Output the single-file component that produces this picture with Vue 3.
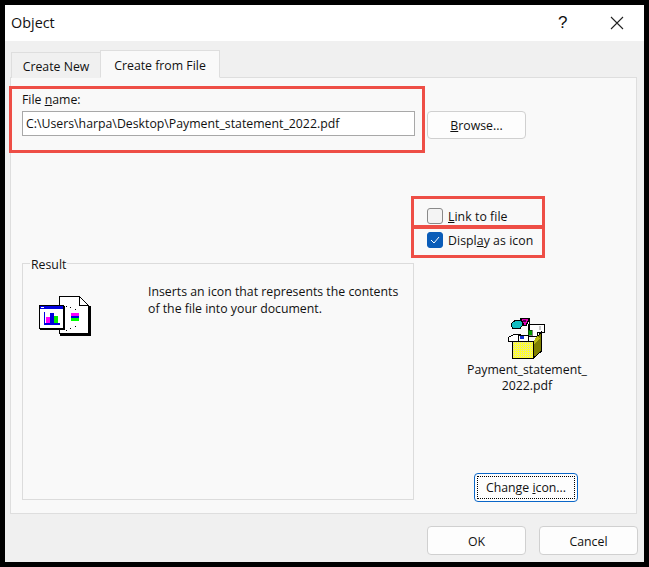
<script setup>
const dots = [[28,11],[32,12],[37,14],[37,31],[32,33],[28,35]]
</script>

<template>
  <div class="frame">
    <div class="dialog">
      <header class="titlebar">
        <span class="title">Object</span>
        <span class="help">?</span>
        <svg class="close" width="14" height="14" viewBox="0 0 14 14"><path d="M1 1 13 13M13 1 1 13" stroke="#222" stroke-width="1.1" fill="none"/></svg>
      </header>
      <div class="body">
        <div class="tabs">
          <div class="tab">Create New</div>
          <div class="tab active">Create from File</div>
        </div>
        <div class="panel">
          <div class="left">
            <label class="file-label">File <u>n</u>ame:</label>
            <div class="input">C:\Users\harpa\Desktop\Payment_statement_2022.pdf</div>
            <section class="result">
              <span class="legend">Result</span>
              <svg class="doc-icon" width="54" height="42" viewBox="0 0 54 42" shape-rendering="crispEdges">
                <path d="M21.5 1.5H41.5L50.5 10.5V38.5H21.5Z" fill="#fff" stroke="#000"/>
                <path d="M41.5 1.5V10.5H50.5Z" fill="#fff" stroke="#000"/>
                <rect x="51" y="11" width="2" height="30" fill="#000"/>
                <rect x="22" y="39" width="31" height="2" fill="#000"/>
                <rect v-for="d in dots" :key="d[0]+'-'+d[1]" :x="d[0]" :y="d[1]" width="1" height="1" fill="#000"/>
                <rect x="33" y="18" width="8" height="3" fill="#ff00ff"/>
                <rect x="33" y="21" width="8" height="2" fill="#0000e0"/>
                <rect x="33" y="23" width="8" height="3" fill="#00ff00"/>
                <rect x="1.5" y="10.5" width="24" height="23" fill="#fff" stroke="#000"/>
                <rect x="2" y="11" width="23" height="3" fill="#0000e0"/>
                <rect x="3" y="12" width="3" height="1" fill="#fff"/>
                <rect x="26" y="11" width="1" height="24" fill="#000"/>
                <rect x="2" y="34" width="25" height="1" fill="#000"/>
                <rect x="8" y="22" width="4" height="6" fill="#ff00ff"/>
                <rect x="12" y="18" width="4" height="10" fill="#0000e0"/>
                <rect x="16" y="21" width="4" height="7" fill="#00ee00"/>
                <rect x="6" y="17" width="1" height="13" fill="#0000e0"/>
                <rect x="6" y="28" width="16" height="2" fill="#0000e0"/>
              </svg>
              <p class="desc">Inserts an icon that represents the contents<br>of the file into your document.</p>
            </section>
          </div>
          <div class="right">
            <button class="btn browse"><u>B</u>rowse...</button>
            <div class="check first"><span class="box"></span><span class="cap"><u>L</u>ink to file</span></div>
            <div class="check second">
              <span class="box on">
                <svg width="10" height="8" viewBox="0 0 10 8"><path d="M1 4 4 7 9 1" stroke="#fff" stroke-width="1" fill="none"/></svg>
              </span>
              <span class="cap">Displ<u>a</u>y as icon</span>
            </div>
            <div class="preview">
              <svg class="box-icon" width="42" height="42" viewBox="0 0 42 42" shape-rendering="crispEdges">
                <defs>
                  <pattern id="dither" width="2" height="2" patternUnits="userSpaceOnUse">
                    <rect width="2" height="2" fill="#ffff30"/>
                    <rect x="1" y="1" width="1" height="1" fill="#d8d8c8"/>
                  </pattern>
                </defs>
                <path d="M22 7.5H38.5V15.5H31V19H22Z" fill="#fff" stroke="#000"/>
                <rect x="33" y="9" width="2" height="4" fill="#c8c8c8"/>
                <path d="M5.5 6.5 9 3.5H15L17.5 7 14 11.5H7L5.5 9Z" fill="#10bcc0" stroke="#000"/>
                <path d="M14.5 1.5H23.5L20 8.5H18Z" fill="#e000b8" stroke="#000"/>
                <rect x="17" y="3" width="3" height="2" fill="#500050"/>
                <rect x="23" y="2" width="1" height="15" fill="#000"/>
                <rect x="22" y="13" width="4" height="5" fill="#00a000" stroke="#000" stroke-width="0.5"/>
                <path d="M2.5 22.5V20.5L7.5 17.5H14V24H2.5Z" fill="#fff" stroke="#000"/>
                <rect x="12.5" y="18.5" width="10" height="7" fill="#fff" stroke="#000"/>
                <rect x="14" y="19" width="4" height="3" fill="#1030d0"/>
                <path d="M27 25.5 35.5 14.5V34L27 41.5Z" fill="#808000" stroke="#000"/>
                <path d="M27 24.5 31.5 19 34 21 27.5 28Z" fill="#b8b810"/>
                <rect x="6.5" y="24.5" width="21" height="17" fill="url(#dither)" stroke="#000"/>
              </svg>
              <div class="fname">Payment_statement_<br>2022.pdf</div>
            </div>
            <button class="btn change"><span class="focus"><span>Change <u>i</u>con...</span></span></button>
          </div>
        </div>
        <footer class="footer">
          <button class="btn action">OK</button>
          <button class="btn action">Cancel</button>
        </footer>
      </div>
      <div class="mark m1"></div>
      <div class="mark m2"></div>
      <div class="mark m3"></div>
    </div>
  </div>
</template>

<style>
html, body { margin: 0; background: #000; }
</style>

<style scoped>
.frame { width: 649px; height: 567px; box-sizing: border-box; padding: 5px; background: #000; font-family: "Open Sans", "Noto Sans", sans-serif; font-size: 12.3px; color: #111; }
.dialog { position: relative; width: 639px; height: 557px; display: flex; flex-direction: column; background: #f0f0f0; }
.titlebar { height: 36px; flex: none; background: #fff; display: flex; align-items: center; padding-left: 6px; }
.title { font-size: 14.4px; flex: 1; position: relative; top: -1px; }
.help { font-size: 17px; width: 11px; margin-right: 41px; font-family: "Liberation Sans", sans-serif; }
.close { margin-right: 20px; }
.body { flex: 1; display: flex; flex-direction: column; padding: 0 7px 0 5px; }
.tabs { display: flex; height: 37px; align-items: flex-end; padding-left: 1px; margin-bottom: -1px; position: relative; z-index: 1; }
.tab { height: 26px; line-height: 27px; box-sizing: border-box; background: #f0f0f0; border: 1px solid #dedede; border-bottom: none; width: 90px; text-align: center; white-space: nowrap; }
.tab.active { height: 28px; width: 120px; margin-left: -1px; line-height: 29px; background: #f9f9f9; border-bottom: 1px solid #f9f9f9; }
.panel { height: 437px; flex: none; box-sizing: border-box; background: #f9f9f9; border: 1px solid #dedede; display: flex; padding: 0 0 0 11px; }
.left { width: 393px; display: flex; flex-direction: column; }
.file-label { line-height: 16px; margin-top: 14px; height: 19px; }
.input { height: 25px; box-sizing: border-box; background: #fff; border: 1px solid #a8a8a8; line-height: 23px; padding-left: 3px; white-space: nowrap; }
.result { position: relative; margin-top: 127px; width: 392px; height: 237px; box-sizing: border-box; border: 1px solid #dcdcdc; display: flex; align-items: flex-start; }
.legend { position: absolute; left: 7px; top: -7px; padding: 0 1px; background: #f9f9f9; line-height: 16px; }
.doc-icon { position: absolute; left: 15px; top: 31px; }
.desc { margin: 19px 0 0 125px; line-height: 17px; white-space: nowrap; }
.right { margin-left: 12px; width: 200px; display: flex; flex-direction: column; align-items: flex-start; padding-top: 33px; }
.btn { font: inherit; color: inherit; background: #fdfdfd; border: 1px solid #d0d0d0; border-radius: 4px; padding: 0; box-sizing: border-box; }
.browse { width: 99px; height: 28px; }
.check { display: flex; align-items: center; height: 17px; gap: 5px; }
.check.first { margin-top: 68px; }
.check.second { margin-top: 7px; }
.cap { padding-top: 2px; letter-spacing: 0.05px; }
.box { width: 16px; height: 16px; box-sizing: border-box; border: 1px solid #8a8a8a; border-radius: 3px; background: #f4f4f4; display: flex; align-items: center; justify-content: center; }
.box.on { background: #0a5cb8; border-color: #0a5cb8; }
.preview { width: 200px; margin-top: 69px; display: flex; flex-direction: column; align-items: center; }
.box-icon { margin-left: 0; display: block; }
.fname { margin-top: 3px; text-align: center; line-height: 16px; white-space: nowrap; }
.change { margin-top: 79px; margin-left: 47px; width: 104px; height: 29px; border: 1px solid #0a66c8; padding: 2px; background: #fdfdfd; }
.focus { display: flex; width: 100%; height: 100%; align-items: center; justify-content: center; border: 1px dotted #000; box-sizing: border-box; }
.footer { flex: 1; display: flex; justify-content: flex-end; align-items: flex-start; gap: 13px; padding-top: 12px; margin-right: -1px; }
.action { width: 99px; height: 29px; padding-top: 2px; }
.mark { position: absolute; border: 3px solid #ee4e46; box-sizing: border-box; pointer-events: none; z-index: 2; }
.m1 { left: 4px; top: 81px; width: 416px; height: 67px; }
.m2 { left: 406px; top: 191px; width: 134px; height: 33px; }
.m3 { left: 406px; top: 220px; width: 134px; height: 33px; }
</style>
